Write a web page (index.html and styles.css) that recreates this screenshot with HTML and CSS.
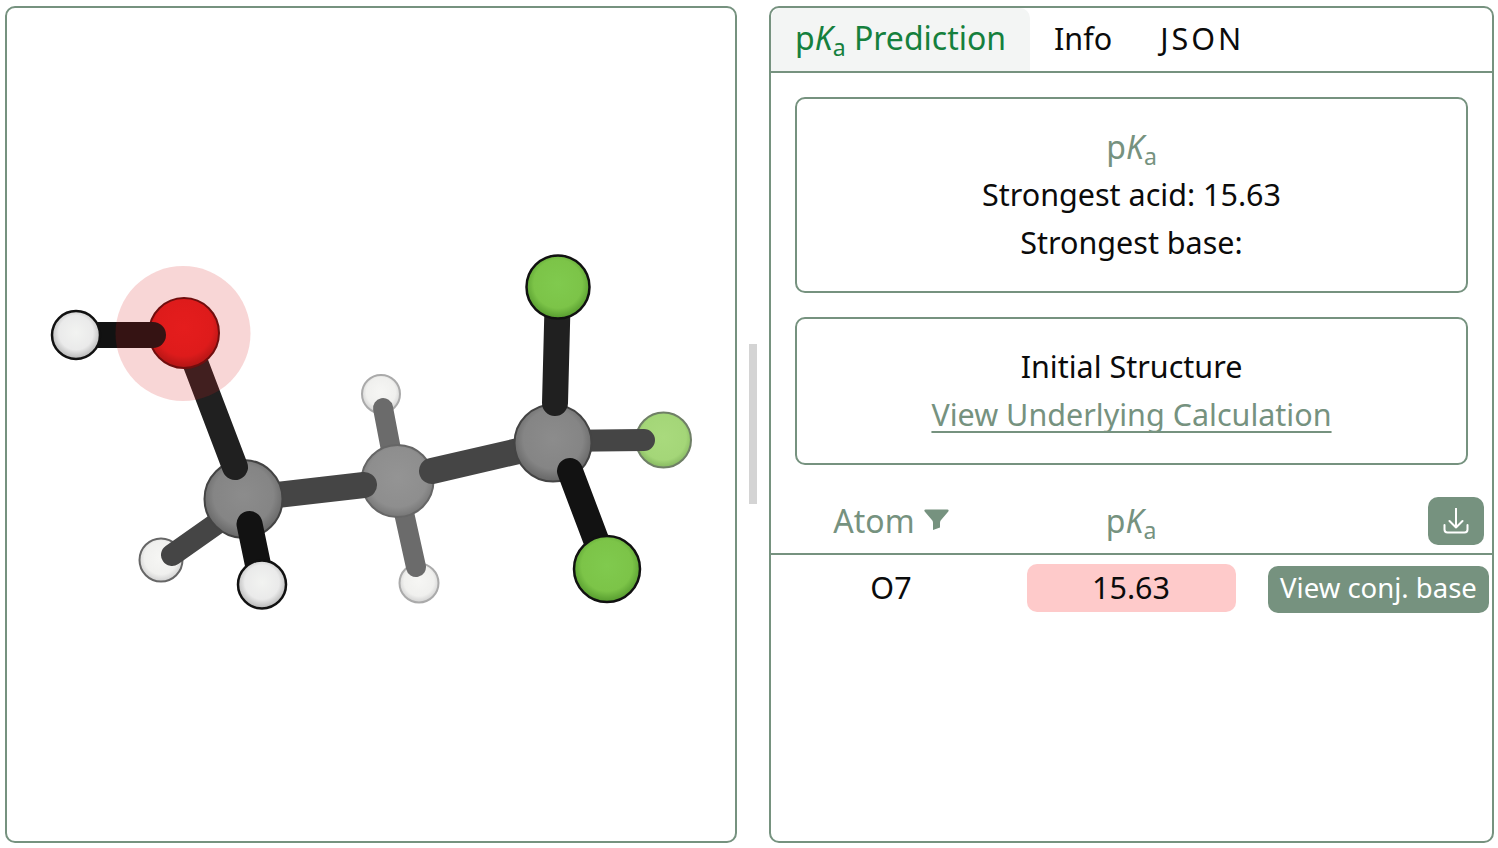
FILE: index.html
```html
<!DOCTYPE html>
<html lang="en">
<head>
<meta charset="utf-8">
<title>pKa Prediction</title>
<link rel="stylesheet" href="styles.css">
</head>
<body>
<main class="layout">
  <section class="panel viewer">
    <svg class="molecule" viewBox="7 8 728 833" role="img" aria-label="Molecule">
      <defs>
        <radialGradient id="gH" cx="50%" cy="45%" r="55%"><stop offset="0" stop-color="#f2f3f1"/><stop offset=".65" stop-color="#eaeaea"/><stop offset="1" stop-color="#b4b4b4"/></radialGradient>
        <radialGradient id="gHb" cx="50%" cy="45%" r="55%"><stop offset="0" stop-color="#f6f6f4"/><stop offset=".7" stop-color="#f0f0ee"/><stop offset="1" stop-color="#d0d0d0"/></radialGradient>
        <radialGradient id="gC" cx="50%" cy="45%" r="55%"><stop offset="0" stop-color="#8c8c8c"/><stop offset=".7" stop-color="#858585"/><stop offset="1" stop-color="#666"/></radialGradient>
        <radialGradient id="gCb" cx="50%" cy="45%" r="55%"><stop offset="0" stop-color="#949494"/><stop offset=".75" stop-color="#8e8e8e"/><stop offset="1" stop-color="#767676"/></radialGradient>
        <radialGradient id="gO" cx="50%" cy="42%" r="58%"><stop offset="0" stop-color="#e81e1e"/><stop offset=".7" stop-color="#e01c1c"/><stop offset="1" stop-color="#a81414"/></radialGradient>
        <radialGradient id="gF" cx="50%" cy="45%" r="55%"><stop offset="0" stop-color="#80ca4e"/><stop offset=".7" stop-color="#7cc448"/><stop offset="1" stop-color="#559a2e"/></radialGradient>
        <radialGradient id="gFb" cx="50%" cy="45%" r="55%"><stop offset="0" stop-color="#a9da7d"/><stop offset=".75" stop-color="#a4d678"/><stop offset="1" stop-color="#86b860"/></radialGradient>
      </defs>
      <circle class="atom-h-back" cx="381" cy="394" r="19"/>
      <circle class="atom-h-back" cx="419" cy="583" r="19.5"/>
      <line class="bond bond-far" x1="383" y1="408" x2="397" y2="481"/>
      <line class="bond bond-far" x1="416" y1="567" x2="397" y2="481"/>
      <circle class="atom-c-back" cx="397.5" cy="481" r="36"/>
      <line class="bond bond-mid" x1="364" y1="485" x2="243" y2="499"/>
      <line class="bond bond-mid" x1="432" y1="471" x2="553" y2="443"/>
      <circle class="atom-f-back" cx="663.5" cy="440" r="27.5"/>
      <line class="bond bond-mid bond-thin" x1="644" y1="440" x2="553" y2="441"/>
      <circle class="atom-h-mid" cx="161" cy="560" r="21.5"/>
      <line class="bond bond-mid bond-thin" x1="172" y1="555" x2="243" y2="505"/>
      <circle class="atom-c" cx="243.5" cy="499" r="39"/>
      <circle class="atom-c" cx="553" cy="443" r="38.5"/>
      <line class="bond bond-near" x1="570" y1="471" x2="607" y2="569"/>
      <circle class="atom-f" cx="607" cy="569" r="33"/>
      <line class="bond bond-upper" x1="555" y1="403" x2="558" y2="287"/>
      <circle class="atom-f" cx="558" cy="287" r="31.5"/>
      <line class="bond bond-near" x1="249.5" y1="524" x2="262" y2="584"/>
      <circle class="atom-h" cx="262" cy="584.5" r="24"/>
      <line class="bond bond-upper" x1="184" y1="333" x2="235" y2="467"/>
      <circle class="atom-o" cx="184" cy="333" r="35"/>
      <line class="bond bond-near" x1="76" y1="335" x2="153" y2="335"/>
      <circle class="atom-h" cx="76" cy="335" r="24"/>
      <circle class="halo" cx="183" cy="333.5" r="67.5"/>
    </svg>
  </section>
  <div class="divider"><span class="handle"></span></div>
  <section class="panel results">
    <nav class="tabs">
      <a class="tab tab-active">p<i>K</i><sub>a</sub> Prediction</a>
      <a class="tab">Info</a>
      <a class="tab tab-json">JSON</a>
    </nav>
    <div class="cards">
      <div class="card">
        <div class="muted large">p<i>K</i><sub>a</sub></div>
        <div>Strongest acid: 15.63</div>
        <div>Strongest base:</div>
      </div>
      <div class="card">
        <div>Initial Structure</div>
        <a class="calc-link">View Underlying Calculation</a>
      </div>
    </div>
    <div class="table-head">
      <div class="head-cell muted large"><span>Atom</span>
        <svg class="filter-icon" viewBox="0 0 25 21" aria-hidden="true"><path d="M1.500.5H23.500C24.500.5 25 1.500 24.300 2.400L17.500 10.500C16.500 11.500 16 12.500 16 14V18.500L9 21V14C9 12.500 8.500 11.500 7.500 10.500L.7 2.400C0 1.500.5.5 1.500.5Z"/></svg>
      </div>
      <div class="head-cell muted large"><span>p<i>K</i><sub>a</sub></span></div>
      <div class="head-action">
        <button class="icon-btn" aria-label="Download">
          <svg class="download-icon" viewBox="0 0 26 26" aria-hidden="true"><path d="M13 .5V19.500M6.500 13L13 19.500L19.500 13M1.500 17V21.500C1.500 23.200 2.800 24.500 4.500 24.500H21.500C23.200 24.500 24.500 23.200 24.500 21.500V17"/></svg>
        </button>
      </div>
    </div>
    <div class="table-row">
      <div class="cell">O7</div>
      <div class="cell"><span class="pill">15.63</span></div>
      <div class="cell cell-action"><button class="conj-btn">View conj. base</button></div>
    </div>
  </section>
</main>
</body>
</html>
```
FILE: styles.css
```css
* { box-sizing: border-box; }
html, body { margin: 0; height: 100%; background: #fff; }
body {
  font-family: "Noto Sans", "Open Sans", sans-serif;
  font-size: 30.5px;
  line-height: 48px;
  color: #0b0b0b;
  overflow: hidden;
}
.layout {
  display: flex;
  height: 848px;
  padding: 6px 4px 5px 5px;
}
.panel {
  border: 2px solid #76927f;
  border-radius: 10px;
  background: #fff;
  overflow: hidden;
}
.viewer { width: 732px; flex: none; }
.molecule { display: block; width: 100%; height: 100%; filter: blur(.4px); }
.divider {
  width: 32px;
  flex: none;
  display: flex;
  align-items: center;
  justify-content: center;
}
.handle { width: 8px; height: 160px; margin-bottom: 1px; background: #d4d4d4; }
.results { width: 725px; flex: none; }

.bond { stroke-linecap: round; fill: none; stroke-width: 26; }
.bond-far { stroke: #6b6b6b; stroke-width: 20; }
.bond-mid { stroke: #454545; }
.bond-thin { stroke-width: 22; }
.bond-upper { stroke: #202020; }
.bond-near { stroke: #121212; }
.atom-h { fill: url(#gH); stroke: #111; stroke-width: 2.500; }
.atom-h-mid { fill: url(#gHb); stroke: #666; stroke-width: 2; }
.atom-h-back { fill: url(#gHb); stroke: #aaa; stroke-width: 2; }
.atom-c { fill: url(#gC); stroke: #444; stroke-width: 2; }
.atom-c-back { fill: url(#gCb); stroke: #666; stroke-width: 2; }
.atom-o { fill: url(#gO); stroke: #5a0c0c; stroke-width: 2; }
.atom-f { fill: url(#gF); stroke: #111; stroke-width: 2.500; }
.atom-f-back { fill: url(#gFb); stroke: #6f7f66; stroke-width: 2; }
.halo { fill: #d81e1e; fill-opacity: .18; }

i { font-style: italic; }
sub { font-size: .72em; line-height: 0; vertical-align: -.28em; }

.large { font-size: 32px; }
.tabs {
  display: flex;
  height: 65px;
  border-bottom: 2px solid #76927f;
}
.tab {
  padding: 0 24px;
  line-height: 60px;
  white-space: nowrap;
}
.tab-active {
  width: 259px;
  font-size: 32px;
  background: #f3f5f4;
  color: #15803d;
  border-radius: 10px 10px 0 0;
}
.tab-json { letter-spacing: 3px; }
.cards {
  display: flex;
  flex-direction: column;
  gap: 24px;
  padding: 24px;
}
.card {
  border: 2px solid #76927f;
  border-radius: 10px;
  padding: 24px;
  text-align: center;
  line-height: 47px;
}
.card > * { display: block; height: 48px; }
.muted { color: #76927f; }
.calc-link {
  color: #76927f;
  text-decoration: underline;
  text-decoration-skip-ink: none;
  text-underline-offset: 5px;
  text-decoration-thickness: 2px;
}
.table-head {
  display: grid;
  grid-template-columns: 240px 240px 1fr;
  align-items: center;
  height: 66px;
  border-bottom: 2px solid #76927f;
  text-align: center;
}
.head-cell { display: flex; align-items: center; justify-content: center; gap: 9px; }
.filter-icon { width: 25px; height: 21px; margin-top: -4px; fill: #76927f; }
.head-action { display: flex; justify-content: flex-end; padding-right: 8px; }
.icon-btn {
  display: flex;
  align-items: center;
  justify-content: center;
  width: 56px;
  height: 48px;
  padding: 0;
  border: 0;
  border-radius: 10px;
  background: #76927f;
}
.download-icon { width: 26px; height: 26px; fill: none; stroke: #fff; stroke-width: 2; stroke-linecap: round; stroke-linejoin: round; }
.table-row {
  display: grid;
  grid-template-columns: 240px 240px 1fr;
  align-items: start;
  padding-top: 9px;
  line-height: 46px;
  text-align: center;
}
.cell { display: flex; justify-content: center; }
.pill {
  width: 209px;
  height: 48px;
  border-radius: 10px;
  background: #fecaca;
}
.cell-action { justify-content: flex-start; padding: 2px 0 0 17px; }
.conj-btn {
  width: 221px;
  height: 47px;
  padding: 0 0 3px;
  border: 0;
  border-radius: 10px;
  background: #76927f;
  color: #fff;
  font: inherit;
  font-size: 27.5px;
  line-height: 44px;
  white-space: nowrap;
}
```
